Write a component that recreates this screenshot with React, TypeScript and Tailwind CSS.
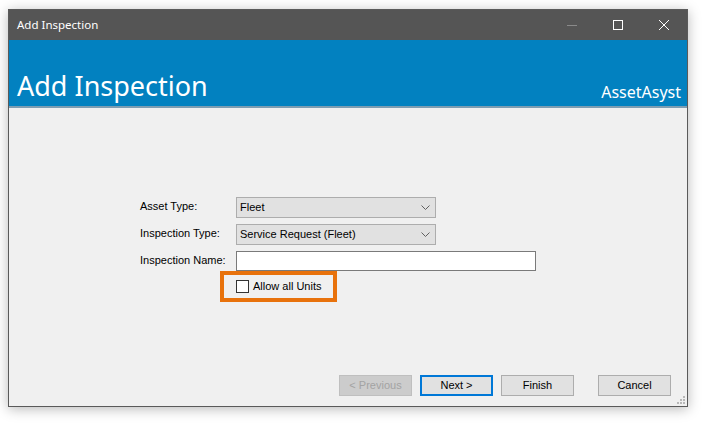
import React from "react";

const ui = { fontFamily: '"Liberation Sans", Arial, sans-serif' };
const seg = { fontFamily: '"Noto Sans", "Open Sans", sans-serif' };

function Chevron() {
  return (
    <svg width="9" height="5" viewBox="0 0 9 5" className="block">
      <path d="M0.5 0.5 L4.5 4.5 L8.5 0.5" fill="none" stroke="#606060" strokeWidth="1" />
    </svg>
  );
}

function Combo({ value }: { value: string }) {
  return (
    <div className="w-[200px] h-[21px] bg-[#e1e1e1] border border-[#adadad] flex items-center justify-between pl-[3px] pr-[5px] text-[11px] text-black">
      <span>{value}</span>
      <Chevron />
    </div>
  );
}

function Btn({
  label,
  variant = "normal",
}: {
  label: string;
  variant?: "normal" | "disabled" | "focus";
}) {
  const cls =
    variant === "disabled"
      ? "bg-[#cccccc] border border-[#bfbfbf] text-[#a3a3a3]"
      : variant === "focus"
      ? "bg-[#e1e1e1] border-2 border-[#0078d7] text-black"
      : "bg-[#e1e1e1] border border-[#adadad] text-black";
  return (
    <div className={`w-[73px] h-[21px] flex items-center justify-center text-[11px] ${cls}`}>
      {label}
    </div>
  );
}

export default function App() {
  return (
    <div className="w-[703px] h-[425px] bg-white pl-[8px] pt-[9px]" style={ui}>
      <div className="w-[680px] h-[398px] border border-[#5a5a5a] bg-[#f0f0f0] flex flex-col shadow-[0_2px_12px_rgba(0,0,0,0.28)]">
        {/* title bar */}
        <div className="h-[30px] bg-[#555555] flex items-center justify-between shrink-0">
          <span className="pl-[8px] text-[11.5px] text-white leading-none" style={seg}>
            Add Inspection
          </span>
          <div className="flex h-full">
            <div className="w-[46px] h-full flex items-center justify-center">
              <div className="w-[10px] h-px bg-[#8a8a8a]" />
            </div>
            <div className="w-[46px] h-full flex items-center justify-center">
              <div className="w-[10px] h-[10px] border border-white" />
            </div>
            <div className="w-[46px] h-full flex items-center justify-center">
              <svg width="10" height="10" viewBox="0 0 10 10">
                <path d="M0 0 L10 10 M10 0 L0 10" stroke="white" strokeWidth="1" />
              </svg>
            </div>
          </div>
        </div>
        {/* blue header */}
        <div className="h-[66px] bg-[#0281c0] flex items-end justify-between shrink-0 pl-[8px] pr-[6px]" style={seg}>
          <span className="text-[27px] leading-none text-white pb-[7px]">Add Inspection</span>
          <span className="text-[16px] leading-none text-white pb-[6px]">AssetAsyst</span>
        </div>
        <div className="h-[2px] bg-[#7d9db2] shrink-0" />
        {/* content */}
        <div className="flex-1 flex flex-col">
          <div className="flex-1 pt-[89px] pl-[131px]">
            <div className="flex flex-col gap-[6px]">
              <div className="flex items-center">
                <span className="w-[96px] text-[11px] text-black -mt-[2px]">Asset Type:</span>
                <Combo value="Fleet" />
              </div>
              <div className="flex items-center">
                <span className="w-[96px] text-[11px] text-black -mt-[2px]">Inspection Type:</span>
                <Combo value="Service Request (Fleet)" />
              </div>
              <div className="flex items-center">
                <span className="w-[96px] text-[11px] text-black -mt-[2px]">Inspection Name:</span>
                <div className="w-[300px] h-[20px] bg-white border border-[#7a7a7a]" />
              </div>
            </div>
            <div className="ml-[80px] w-[117px] h-[31px] border-4 border-[#e8720c] flex items-center pl-[12px] gap-[4px]">
              <div className="w-[13px] h-[13px] bg-white border border-[#333333]" />
              <span className="text-[11px] text-black">Allow all Units</span>
            </div>
          </div>
          <div className="flex justify-end items-end pr-[16px] pb-[10px] relative">
            <div className="flex gap-[8px]">
              <Btn label="< Previous" variant="disabled" />
              <Btn label="Next >" variant="focus" />
              <Btn label="Finish" />
            </div>
            <div className="ml-[24px]">
              <Btn label="Cancel" />
            </div>
            <svg width="8" height="8" viewBox="0 0 8 8" className="absolute right-[2px] bottom-[2px]">
              <rect x="6" y="0" width="2" height="2" fill="#b8b8b8" />
              <rect x="3" y="3" width="2" height="2" fill="#b8b8b8" />
              <rect x="6" y="3" width="2" height="2" fill="#b8b8b8" />
              <rect x="0" y="6" width="2" height="2" fill="#b8b8b8" />
              <rect x="3" y="6" width="2" height="2" fill="#b8b8b8" />
              <rect x="6" y="6" width="2" height="2" fill="#b8b8b8" />
            </svg>
          </div>
        </div>
      </div>
    </div>
  );
}
